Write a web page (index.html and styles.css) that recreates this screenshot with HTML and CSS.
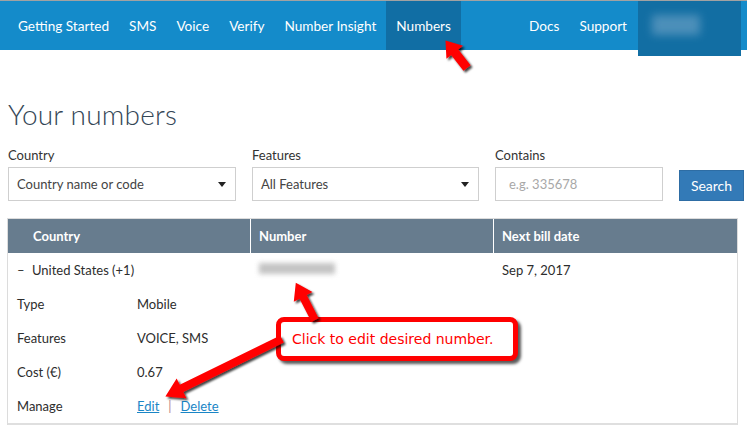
FILE: index.html
```html
<!DOCTYPE html>
<html>
<head>
<meta charset="utf-8">
<link rel="stylesheet" href="styles.css">
</head>
<body>
<div class="page">
  <nav class="nav">
    <div class="nav-left">
      <a class="nav-item">Getting Started</a>
      <a class="nav-item">SMS</a>
      <a class="nav-item">Voice</a>
      <a class="nav-item">Verify</a>
      <a class="nav-item">Number Insight</a>
      <a class="nav-item active">Numbers</a>
    </div>
    <div class="nav-right">
      <a class="nav-item">Docs</a>
      <a class="nav-item">Support</a>
      <div class="user-box"><span class="user-blur"></span></div>
    </div>
  </nav>

  <main class="content">
    <h1 class="title">Your numbers</h1>
    <div class="filters">
      <div class="field">
        <label class="label">Country</label>
        <div class="select"><span>Country name or code</span><span class="caret"></span></div>
      </div>
      <div class="field">
        <label class="label">Features</label>
        <div class="select"><span>All Features</span><span class="caret"></span></div>
      </div>
      <div class="field">
        <label class="label">Contains</label>
        <div class="input"><span class="placeholder">e.g. 335678</span></div>
      </div>
      <div class="field field-btn">
        <button class="btn">Search</button>
      </div>
    </div>

    <div class="table">
      <div class="thead">
        <div class="th th-first">Country</div>
        <div class="th">Number</div>
        <div class="th">Next bill date</div>
      </div>
      <div class="tr">
        <div class="td td-first"><span class="dash">–</span>United States (+1)</div>
        <div class="td"><span class="num-blur"></span></div>
        <div class="td">Sep 7, 2017</div>
      </div>
      <div class="detail">
        <div class="drow"><span class="dlabel">Type</span><span>Mobile</span></div>
        <div class="drow"><span class="dlabel">Features</span><span>VOICE, SMS</span></div>
        <div class="drow"><span class="dlabel">Cost (€)</span><span>0.67</span></div>
        <div class="drow"><span class="dlabel">Manage</span><span><a class="link">Edit</a><span class="sep">|</span><a class="link">Delete</a></span></div>
      </div>
    </div>
  </main>

  <div class="callout">Click to edit desired number.</div>

  <svg class="annot" width="747" height="428" viewBox="0 0 747 428">
    <defs>
      <filter id="sh" x="-30%" y="-30%" width="160%" height="160%">
        <feDropShadow dx="2" dy="2" stdDeviation="1.3" flood-color="#000" flood-opacity="0.75"/>
      </filter>
    </defs>
    <g fill="#ff0000" filter="url(#sh)">
      <polygon transform="translate(467,68) rotate(-127.9)" points="0,-4.5 20,-4.5 20,-10.5 35,0 20,10.5 20,4.5 0,4.5"/>
      <polygon transform="translate(315,320) rotate(-117.2)" points="0,-4 26,-4 26,-10.5 42,0 26,10.5 26,4 0,4"/>
      <polygon transform="translate(282,339) rotate(153.8)" points="0,-4 112,-4 112,-11 130,0 112,11 112,4 0,4"/>
    </g>
  </svg>
</div>
</body>
</html>
```

FILE: styles.css
```css
* { box-sizing: border-box; }
html, body { margin: 0; padding: 0; background: #fff; }
body {
  font-family: "Lato", "Noto Sans", sans-serif;
  font-size: 13px;
  color: #2d2d2d;
  width: 747px;
  height: 428px;
  overflow: hidden;
}
.page { position: relative; width: 747px; height: 428px; border-top: 1px solid #a2a2a2; }

.nav {
  display: flex;
  justify-content: space-between;
  height: 49px;
  background: #148bca;
  padding: 0 6px 0 8px;
}
.nav-left, .nav-right { display: flex; align-items: flex-start; }
.nav-item {
  display: block;
  height: 49px;
  line-height: 50px;
  padding: 0 10px;
  color: #fff;
  font-size: 13.6px;
  font-weight: 400;
}
.nav-item.active { background: #116ea4; }
.user-box {
  width: 103px;
  height: 55px;
  margin-left: 1px;
  background: #126ea3;
  display: flex;
  align-items: flex-start;
  padding: 14px 0 0 14px;
}
.user-blur {
  display: block;
  width: 48px;
  height: 20px;
  background: #5b98c0;
  filter: blur(4px);
  opacity: 0.8;
}

.content { padding: 0 9px 0 8px; }
.title {
  margin: 47px 0 0;
  font-size: 28px;
  font-weight: 300;
  color: #344656;
  line-height: 34px;
  letter-spacing: 0.2px;
}
.filters {
  display: grid;
  grid-template-columns: 228px 227px 168px 65px;
  column-gap: 16px;
  margin-top: 16px;
}
.field { display: flex; flex-direction: column; }
.label { font-size: 13px; color: #333; line-height: 16px; height: 20px; }
.select, .input {
  height: 34px;
  border: 1px solid #cfcfcf;
  display: flex;
  align-items: center;
  justify-content: space-between;
  padding: 0 9px 0 8px;
  color: #444;
  font-size: 13px;
}
.input { padding-left: 13px; }
.placeholder { color: #a8a8a8; }
.caret {
  width: 0; height: 0;
  border-left: 4px solid transparent;
  border-right: 4px solid transparent;
  border-top: 5px solid #222;
}
.field-btn { justify-content: flex-start; padding-top: 23px; }
.btn {
  height: 31px;
  width: 65px;
  background: #337ab7;
  color: #fff;
  border: 1px solid #2e6da4;
  font-family: inherit;
  font-size: 14px;
  padding: 0;
}

.table {
  margin: 17px 0 0 -1px;
  width: 731px;
  border: 1px solid #dcdcdc;
  border-bottom: none;
}
.thead {
  display: grid;
  grid-template-columns: 242px 242px 1fr;
  column-gap: 1px;
  background: #fff;
}
.th {
  background: #677c8e;
  color: #fff;
  font-weight: 700;
  height: 34px;
  line-height: 35px;
  padding-left: 8px;
  font-size: 13px;
}
.th-first { padding-left: 25px; }
.tr {
  display: grid;
  grid-template-columns: 242px 242px 1fr;
  column-gap: 1px;
  height: 34px;
  align-items: center;
}
.td { padding-left: 8px; display: flex; align-items: center; }
.td-first { padding-left: 9px; }
.dash { width: 15px; display: inline-block; }
.num-blur {
  display: block;
  width: 76px;
  height: 11px;
  background: #c4c4c4;
  filter: blur(2.5px);
  margin-top: -3px;
}
.detail { border-bottom: 2px solid #dfdfdf; }
.drow { display: flex; height: 34px; align-items: center; padding-left: 9px; }
.dlabel { width: 120px; }
.link { color: #1a86c6; text-decoration: underline; }
.sep { color: #b88; margin: 0 9px 0 9px; }

.callout {
  position: absolute;
  left: 276px;
  top: 316px;
  width: 242px;
  height: 44px;
  border: 5px solid #ff0000;
  border-radius: 8px;
  background: #fff;
  box-shadow: 3px 3px 3px rgba(0,0,0,0.65);
  color: #ff0000;
  font-family: "DejaVu Sans", sans-serif;
  font-size: 14px;
  line-height: 34px;
  padding-left: 11px;
  white-space: nowrap;
}
.annot { position: absolute; left: 0; top: -1px; pointer-events: none; }
```
